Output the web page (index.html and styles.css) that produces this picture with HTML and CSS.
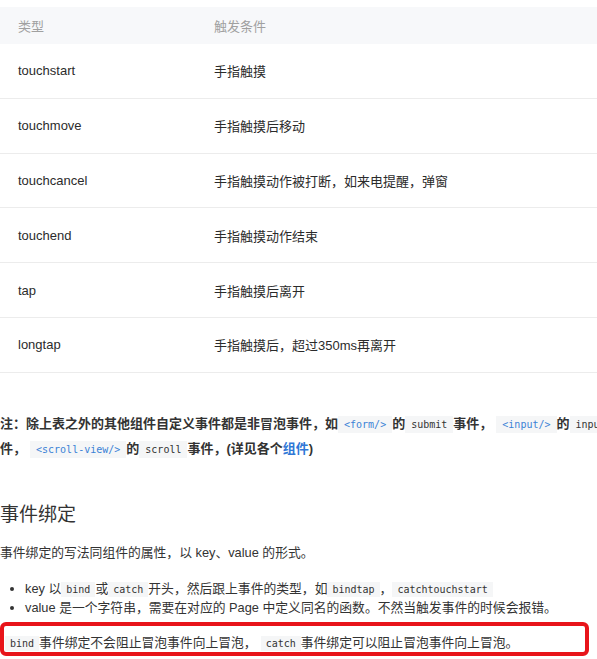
FILE: index.html
```html
<!DOCTYPE html>
<html lang="zh">
<head>
<meta charset="utf-8">
<title>事件</title>
<link rel="stylesheet" href="styles.css">
</head>
<body>
<div class="page">
  <div class="content">
    <table class="events">
      <thead>
        <tr><th class="c1">类型</th><th>触发条件</th></tr>
      </thead>
      <tbody>
        <tr><td class="c1">touchstart</td><td>手指触摸</td></tr>
        <tr><td class="c1">touchmove</td><td>手指触摸后移动</td></tr>
        <tr><td class="c1">touchcancel</td><td>手指触摸动作被打断，如来电提醒，弹窗</td></tr>
        <tr><td class="c1">touchend</td><td>手指触摸动作结束</td></tr>
        <tr><td class="c1">tap</td><td>手指触摸后离开</td></tr>
        <tr><td class="c1">longtap</td><td>手指触摸后，超过350ms再离开</td></tr>
      </tbody>
    </table>

    <p class="note">注：除上表之外的其他组件自定义事件都是非冒泡事件，如<code class="tag">&lt;form/&gt;</code>的<code>submit</code>事件，<code class="tag gap">&lt;input/&gt;</code>的<code>input</code> 事件，<code class="tag gap">&lt;scroll-view/&gt;</code>的<code>scroll</code>事件，(详见各个<a class="link" href="#">组件</a>)</p>

    <h2 class="title">事件绑定</h2>
    <p class="para">事件绑定的写法同组件的属性，以 key、value 的形式。</p>
    <ul class="list">
      <li>key 以<code class="sm">bind</code>或<code class="sm">catch</code>开头，然后跟上事件的类型，如<code class="sm">bindtap</code>，<code class="sm">catchtouchstart</code></li>
      <li>value 是一个字符串，需要在对应的 Page 中定义同名的函数。不然当触发事件的时候会报错。</li>
    </ul>
    <p class="boxed"><code class="sm">bind</code>事件绑定不会阻止冒泡事件向上冒泡，<code class="sm gap">catch</code>事件绑定可以阻止冒泡事件向上冒泡。</p>
  </div>
</div>
</body>
</html>
```

FILE: styles.css
```css
html, body {
  margin: 0;
  padding: 0;
  background: #fff;
}
body {
  font-family: "Liberation Sans", "Noto Sans CJK SC", sans-serif;
  color: #333;
}
.page {
  width: 597px;
  height: 659px;
  overflow: hidden;
  padding-top: 7px;
  box-sizing: border-box;
}
.content {
  width: 640px;
}
.events {
  width: 597px;
  border-collapse: collapse;
  font-size: 13px;
}
.events th {
  background: #f7f8fa;
  color: #a0a0a0;
  font-weight: normal;
  text-align: left;
  height: 37px;
  padding: 0;
}
.events td {
  height: 53.8px;
  padding: 0;
  border-bottom: 1px solid #ececec;
  color: #2b2b2b;
}
.events th.c1, .events td.c1 {
  width: 214px;
  padding-left: 18px;
  box-sizing: border-box;
}
.note {
  margin: 38px 0 0 0;
  font-size: 13px;
  line-height: 25px;
  font-weight: bold;
  color: #333;
}
code {
  display: inline-block;
  font-family: "DejaVu Sans Mono", monospace;
  font-size: 10px;
  line-height: 17px;
  font-weight: normal;
  background: #f5f6f7;
  padding: 0 6px;
  color: #333;
}
code.tag {
  color: #3b82d6;
}
code.gap {
  margin-left: 4px;
}
.link {
  color: #2f77d6;
  text-decoration: none;
}
.title {
  margin: 40px 0 0 0;
  font-size: 19px;
  line-height: 28px;
  font-weight: normal;
  color: #333;
}
.para {
  margin: 14px 0 0 0;
  font-size: 12.8px;
  line-height: 20px;
}
.list {
  margin: 16px 0 0 0;
  padding-left: 25px;
  font-size: 12.8px;
  line-height: 19px;
}
code.sm {
  padding: 0 5px;
  line-height: 15px;
}
.boxed {
  margin: 5px 0 0 0;
  width: 580px;
  height: 18px;
  box-sizing: content-box;
  border: 4px solid #e8141a;
  border-radius: 6px;
  padding: 8px 0 0 1px;
  font-size: 12.8px;
  line-height: 18px;
}
```
